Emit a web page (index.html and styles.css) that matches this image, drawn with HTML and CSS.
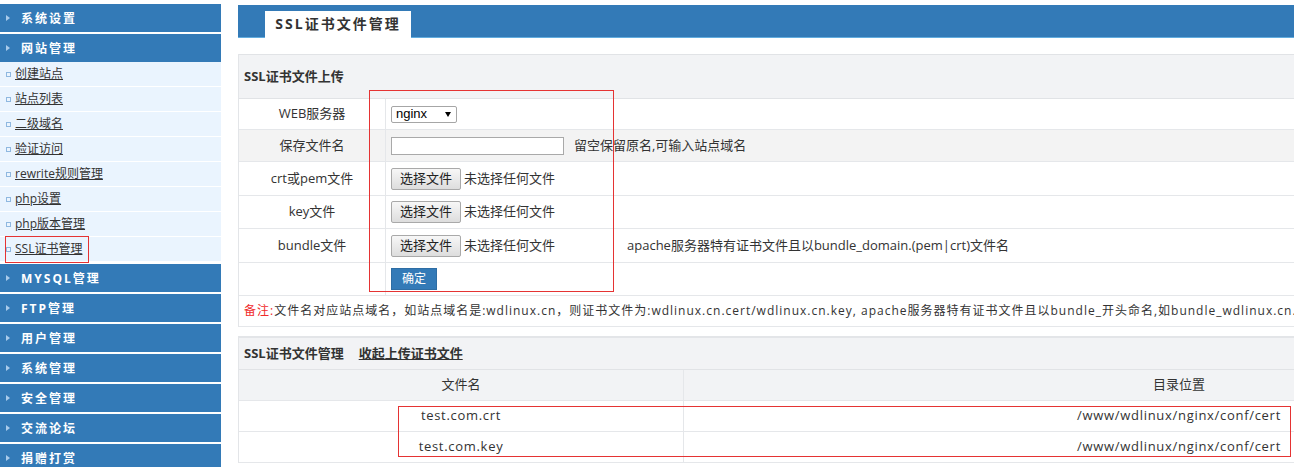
FILE: index.html
```html
<!DOCTYPE html>
<html lang="zh-CN">
<head>
<meta charset="utf-8">
<title>SSL证书文件管理</title>
<link rel="stylesheet" href="styles.css">
</head>
<body>
<div class="page">
  <aside class="sidebar">
    <div class="group"><div class="mhead"><i class="tri"></i>系统设置</div></div>
    <div class="group">
      <div class="mhead"><i class="tri"></i>网站管理</div>
      <ul class="sub">
        <li><i class="sq"></i><a>创建站点</a></li>
        <li><i class="sq"></i><a>站点列表</a></li>
        <li><i class="sq"></i><a>二级域名</a></li>
        <li><i class="sq"></i><a>验证访问</a></li>
        <li><i class="sq"></i><a>rewrite规则管理</a></li>
        <li><i class="sq"></i><a>php设置</a></li>
        <li><i class="sq"></i><a>php版本管理</a></li>
        <li><i class="sq"></i><a>SSL证书管理</a></li>
      </ul>
    </div>
    <div class="group"><div class="mhead"><i class="tri"></i>MYSQL管理</div></div>
    <div class="group"><div class="mhead"><i class="tri"></i>FTP管理</div></div>
    <div class="group"><div class="mhead"><i class="tri"></i>用户管理</div></div>
    <div class="group"><div class="mhead"><i class="tri"></i>系统管理</div></div>
    <div class="group"><div class="mhead"><i class="tri"></i>安全管理</div></div>
    <div class="group"><div class="mhead"><i class="tri"></i>交流论坛</div></div>
    <div class="group"><div class="mhead"><i class="tri"></i>捐赠打赏</div></div>
    <span class="mark mark-side"></span>
  </aside>

  <main class="main">
    <div class="topbar"><div class="tab">SSL证书文件管理</div></div>

    <section class="panel upload">
      <div class="sec-head">SSL证书文件上传</div>
      <div class="frow r31">
        <div class="lab">WEB服务器</div>
        <div class="ctl"><div class="select"><span>nginx</span><i class="arr"></i></div></div>
      </div>
      <div class="frow r32 alt">
        <div class="lab">保存文件名</div>
        <div class="ctl"><div class="tinput"></div><span class="hint">留空保留原名,可输入站点域名</span></div>
      </div>
      <div class="frow r34">
        <div class="lab">crt或pem文件</div>
        <div class="ctl"><span class="fbtn">选择文件</span><span class="fname">未选择任何文件</span></div>
      </div>
      <div class="frow r33">
        <div class="lab">key文件</div>
        <div class="ctl"><span class="fbtn">选择文件</span><span class="fname">未选择任何文件</span></div>
      </div>
      <div class="frow r34">
        <div class="lab">bundle文件</div>
        <div class="ctl"><span class="fbtn">选择文件</span><span class="fname">未选择任何文件</span><span class="bnote">apache服务器特有证书文件且以bundle_domain.(pem|crt)文件名</span></div>
      </div>
      <div class="frow r33">
        <div class="lab"></div>
        <div class="ctl"><span class="okbtn">确定</span></div>
      </div>
      <div class="note"><span class="red">备注:</span>文件名对应站点域名，如站点域名是:wdlinux.cn，则证书文件为:wdlinux.cn.cert/wdlinux.cn.key, apache服务器特有证书文件且以bundle_开头命名,如bundle_wdlinux.cn.crt</div>
      <span class="mark mark-form"></span>
    </section>

    <section class="panel manage">
      <div class="mg-head"><b>SSL证书文件管理</b><a class="toggle">收起上传证书文件</a></div>
      <div class="trow thead"><div class="c1">文件名</div><div class="c2">目录位置</div></div>
      <div class="trow"><div class="c1 mono">test.com.crt</div><div class="c2 mono">/www/wdlinux/nginx/conf/cert</div></div>
      <div class="trow"><div class="c1 mono">test.com.key</div><div class="c2 mono">/www/wdlinux/nginx/conf/cert</div></div>
      <span class="mark mark-table"></span>
    </section>
  </main>
</div>
</body>
</html>
```

FILE: styles.css
```css
* { box-sizing: border-box; }
html, body { margin: 0; padding: 0; overflow: hidden; background: #fff; }
body {
  font-family: "Open Sans", "Noto Sans CJK SC", sans-serif;
  font-size: 13px;
  line-height: 1.2;
  color: #333;
}
.page { display: flex; align-items: flex-start; width: 1700px; }

/* sidebar */
.sidebar { width: 221px; flex: none; margin-top: 4px; position: relative; }
.group { margin-bottom: 2px; }
.mhead {
  height: 28px;
  background: #337ab7;
  color: #fff;
  font-weight: bold;
  font-size: 12px;
  letter-spacing: 2px;
  display: flex;
  align-items: center;
  padding: 3px 0 0 6px;
}
.tri {
  width: 0; height: 0;
  border-left: 4px solid #a9cbeb;
  border-top: 3.5px solid transparent;
  border-bottom: 3.5px solid transparent;
  margin: -3px 11px 0 0;
}
.sub { list-style: none; margin: 0; padding: 0; }
.sub li {
  height: 25px;
  background: #eaf4fe;
  border-bottom: 1px solid #fff;
  display: flex;
  align-items: center;
  padding-left: 6px;
  font-size: 12px;
}
.sq { width: 5px; height: 5px; border: 1px solid #8fb8e0; margin-right: 4px; }
.sub a { color: #333; text-decoration: underline; }

/* annotation marks */
.mark { position: absolute; border: 1px solid #e53333; pointer-events: none; }
.mark-side { left: 5px; top: 232px; width: 84px; height: 27px; }
.mark-form { left: 130px; top: 36px; width: 245px; height: 202px; }
.mark-table { left: 159px; top: 70px; width: 893px; height: 51px; }

/* main */
.main { width: 1436px; flex: none; margin-left: 17px; margin-top: 5px; }
.topbar {
  height: 33px;
  background: #337ab7;
  border-bottom: 1px solid #62addf;
  display: flex;
  align-items: flex-end;
  padding-left: 27px;
}
.tab {
  width: 146px;
  height: 27px;
  margin-bottom: -1px;
  background: #fff;
  font-size: 14px;
  font-weight: bold;
  letter-spacing: 2px;
  display: flex;
  align-items: center;
  justify-content: center;
  color: #333;
}

.panel { position: relative; border-left: 1px solid #e3e5e8; }
.upload { margin-top: 16px; }
.sec-head {
  height: 45px;
  background: #f2f3f5;
  border-top: 1px solid #e1e3e6;
  border-bottom: 1px solid #e1e3e6;
  font-weight: bold;
  padding-left: 5px;
  display: flex;
  align-items: center;
}
.frow { display: flex; border-bottom: 1px solid #e5e7ea; }
.frow.alt { background: #f3f3f3; }
.r31 { height: 31px; }
.r32 { height: 32px; }
.r33 { height: 33px; }
.r34 { height: 34px; }
.lab {
  width: 147px;
  flex: none;
  border-right: 1px solid #e5e7ea;
  display: flex;
  align-items: center;
  justify-content: center;
}
.ctl { flex: 1; display: flex; align-items: center; padding-left: 5px; white-space: nowrap; }

.select {
  width: 66px;
  height: 17px;
  border: 1px solid #a6a6a6;
  border-radius: 2px;
  background: #fff;
  font-family: "Liberation Sans", Arial, sans-serif;
  font-size: 13px;
  color: #000;
  display: flex;
  align-items: center;
  padding: 0 5px 0 4px;
}
.arr {
  margin-left: auto;
  width: 0; height: 0;
  border-top: 5px solid #000;
  border-left: 3.5px solid transparent;
  border-right: 3.5px solid transparent;
}
.tinput { width: 173px; height: 18px; border: 1px solid #a9a9a9; background: #fff; }
.hint { margin-left: 10px; }

.fbtn {
  width: 70px;
  height: 22px;
  border: 1px solid #a9a9a9;
  border-radius: 2px;
  background: linear-gradient(#f7f7f7, #dddddd);
  color: #222;
  display: flex;
  align-items: center;
  justify-content: center;
}
.fname { margin-left: 3px; }
.bnote { margin-left: 72px; }

.okbtn {
  width: 46px;
  height: 22px;
  background: #337ab7;
  border: 1px solid #2e6da4;
  color: #fff;
  font-size: 12px;
  display: flex;
  align-items: center;
  justify-content: center;
}

.note {
  height: 31px;
  border-bottom: 1px solid #e5e7ea;
  display: flex;
  align-items: center;
  padding-left: 5px;
  font-size: 12px;
  letter-spacing: 1px;
  white-space: nowrap;
}
.note .red { color: #f02b2b; }

.manage { margin-top: 9px; }
.mg-head {
  height: 34px;
  background: #f2f3f5;
  border-top: 2px solid #e3e5e8;
  border-bottom: 1px solid #e1e3e6;
  display: flex;
  align-items: center;
  padding-left: 5px;
}
.toggle { margin-left: 15px; font-weight: bold; text-decoration: underline; color: #333; }
.trow { display: flex; height: 31px; border-bottom: 1px solid #e5e7ea; }
.thead { background: #f2f3f5; }
.c1 {
  width: 445px;
  flex: none;
  border-right: 1px solid #e5e7ea;
  display: flex;
  align-items: center;
  justify-content: center;
}
.c2 { flex: 1; display: flex; align-items: center; justify-content: center; }
.mono { letter-spacing: 0.7px; }
```
